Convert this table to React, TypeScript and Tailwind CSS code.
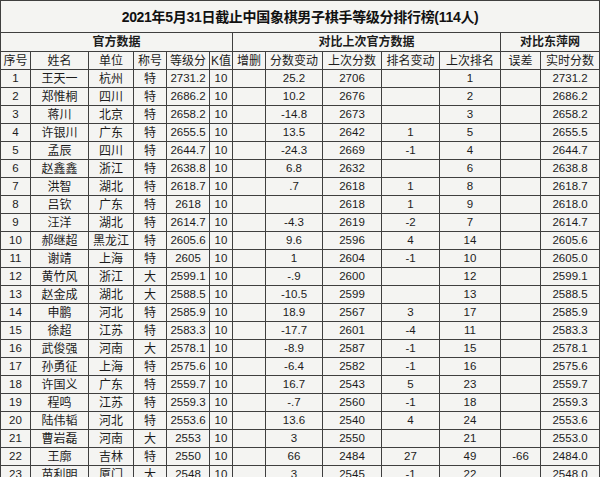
import React from "react"

// 列宽，按截图里竖线的位置量出来
const colWidths = [30, 58, 45, 33, 43, 23, 33, 57, 59, 58, 61, 40, 59]

const headers = ["序号", "姓名", "单位", "称号", "等级分", "K值", "增删", "分数变动", "上次分数", "排名变动", "上次排名", "误差", "实时分数"]

// 序号, 姓名, 单位, 称号, 等级分, K值, 增删, 分数变动, 上次分数, 排名变动, 上次排名, 误差, 实时分数
const rows: string[][] = [
  ["1", "王天一", "杭州", "特", "2731.2", "10", "", "25.2", "2706", "", "1", "", "2731.2"],
  ["2", "郑惟桐", "四川", "特", "2686.2", "10", "", "10.2", "2676", "", "2", "", "2686.2"],
  ["3", "蒋川", "北京", "特", "2658.2", "10", "", "-14.8", "2673", "", "3", "", "2658.2"],
  ["4", "许银川", "广东", "特", "2655.5", "10", "", "13.5", "2642", "1", "5", "", "2655.5"],
  ["5", "孟辰", "四川", "特", "2644.7", "10", "", "-24.3", "2669", "-1", "4", "", "2644.7"],
  ["6", "赵鑫鑫", "浙江", "特", "2638.8", "10", "", "6.8", "2632", "", "6", "", "2638.8"],
  ["7", "洪智", "湖北", "特", "2618.7", "10", "", ".7", "2618", "1", "8", "", "2618.7"],
  ["8", "吕钦", "广东", "特", "2618", "10", "", "", "2618", "1", "9", "", "2618.0"],
  ["9", "汪洋", "湖北", "特", "2614.7", "10", "", "-4.3", "2619", "-2", "7", "", "2614.7"],
  ["10", "郝继超", "黑龙江", "特", "2605.6", "10", "", "9.6", "2596", "4", "14", "", "2605.6"],
  ["11", "谢靖", "上海", "特", "2605", "10", "", "1", "2604", "-1", "10", "", "2605.0"],
  ["12", "黄竹风", "浙江", "大", "2599.1", "10", "", "-.9", "2600", "", "12", "", "2599.1"],
  ["13", "赵金成", "湖北", "大", "2588.5", "10", "", "-10.5", "2599", "", "13", "", "2588.5"],
  ["14", "申鹏", "河北", "特", "2585.9", "10", "", "18.9", "2567", "3", "17", "", "2585.9"],
  ["15", "徐超", "江苏", "特", "2583.3", "10", "", "-17.7", "2601", "-4", "11", "", "2583.3"],
  ["16", "武俊强", "河南", "大", "2578.1", "10", "", "-8.9", "2587", "-1", "15", "", "2578.1"],
  ["17", "孙勇征", "上海", "特", "2575.6", "10", "", "-6.4", "2582", "-1", "16", "", "2575.6"],
  ["18", "许国义", "广东", "特", "2559.7", "10", "", "16.7", "2543", "5", "23", "", "2559.7"],
  ["19", "程鸣", "江苏", "特", "2559.3", "10", "", "-.7", "2560", "-1", "18", "", "2559.3"],
  ["20", "陆伟韬", "河北", "特", "2553.6", "10", "", "13.6", "2540", "4", "24", "", "2553.6"],
  ["21", "曹岩磊", "河南", "大", "2553", "10", "", "3", "2550", "", "21", "", "2553.0"],
  ["22", "王廓", "吉林", "特", "2550", "10", "", "66", "2484", "27", "49", "-66", "2484.0"],
  ["23", "苗利明", "厦门", "大", "2548", "10", "", "3", "2545", "-1", "22", "", "2548.0"],
]

const cell = "border border-[#3f3f3f] p-0 text-center align-middle whitespace-nowrap"

export default function App() {
  return (
    <div
      className="h-[477px] w-[600px] overflow-hidden bg-[#f4f4f2] text-[#1c1c1c]"
      style={{ fontFamily: '"Liberation Sans", "Noto Sans CJK SC", sans-serif' }}
    >
      <table className="w-[599px] table-fixed border-collapse text-[12px] leading-none">
        <colgroup>
          {colWidths.map((w, i) => (
            <col key={i} style={{ width: w }} />
          ))}
        </colgroup>
        <tbody>
          {/* 标题 */}
          <tr className="h-[32px]">
            <td colSpan={13} className={`${cell} text-[14px] font-semibold tracking-[-0.3px] text-[#111]`}>
              2021年5月31日截止中国象棋男子棋手等级分排行榜(114人)
            </td>
          </tr>

          {/* 分组表头 */}
          <tr className="h-[19px]">
            <td colSpan={6} className={`${cell} font-bold`}>官方数据</td>
            <td colSpan={5} className={`${cell} font-bold`}>对比上次官方数据</td>
            <td colSpan={2} className={`${cell} font-bold`}>对比东萍网</td>
          </tr>

          <tr className="h-[18px]">
            {headers.map((h) => (
              <td key={h} className={cell}>
                {h}
              </td>
            ))}
          </tr>

          {rows.map((r) => (
            <tr key={r[0]} className="h-[18px]">
              {r.map((v, i) => (
                <td key={i} className={`${cell} ${i >= 1 && i <= 3 ? "text-[12px]" : "text-[11.5px]"}`}>
                  {v}
                </td>
              ))}
            </tr>
          ))}
        </tbody>
      </table>
    </div>
  )
}
